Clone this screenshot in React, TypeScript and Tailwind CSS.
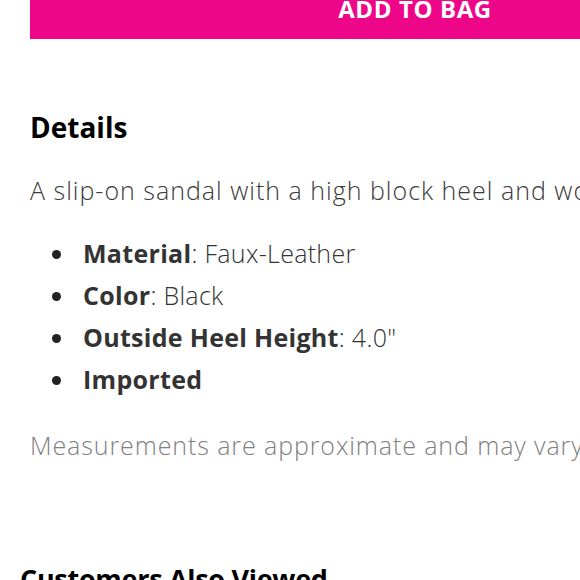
import React from 'react';

const specs = [
  { label: 'Material', value: 'Faux-Leather' },
  { label: 'Color', value: 'Black' },
  { label: 'Outside Heel Height', value: '4.0"' },
  { label: 'Imported', value: '' },
];

const App: React.FC = () => {
  return (
    <div className="w-[580px] h-[580px] overflow-hidden bg-white font-['Open_Sans',sans-serif]">
      <div className="w-[900px] -mt-[21px]">
        <div className="ml-[30px] w-[770px] h-[60px] bg-[#ee0688] flex items-center justify-center">
          <span className="text-white text-[24px] font-bold tracking-wide">ADD TO BAG</span>
        </div>

        <h2 className="ml-[30px] mt-[68px] text-[28px] font-bold text-black leading-[40px]">Details</h2>

        <p className="ml-[30px] mt-[27px] text-[25px] font-light text-[#3a3a3a] tracking-[1px] whitespace-nowrap leading-[32px]">
          A slip-on sandal with a high block heel and wooden details.
        </p>

        <ul className="ml-[52px] mt-[27px] flex flex-col">
          {specs.map((s) => (
            <li key={s.label} className="flex items-center h-[42px] text-[25px] text-[#333] tracking-[0.3px]">
              <span className="w-[9px] h-[9px] rounded-full bg-[#222] mr-[22px]" />
              <span className="font-bold">{s.label}</span>
              {s.value && <span className="font-light whitespace-pre">: {s.value}</span>}
            </li>
          ))}
        </ul>

        <p className="ml-[30px] mt-[28px] text-[25px] font-light text-[#808080] tracking-[0.9px] whitespace-nowrap leading-[32px]">
          Measurements are approximate and may vary slightly.
        </p>

        <h2 className="ml-[20px] mt-[98px] text-[27px] font-bold text-black tracking-[-0.3px] leading-[40px]">Customers Also Viewed</h2>
      </div>
    </div>
  );
};

export default App;
